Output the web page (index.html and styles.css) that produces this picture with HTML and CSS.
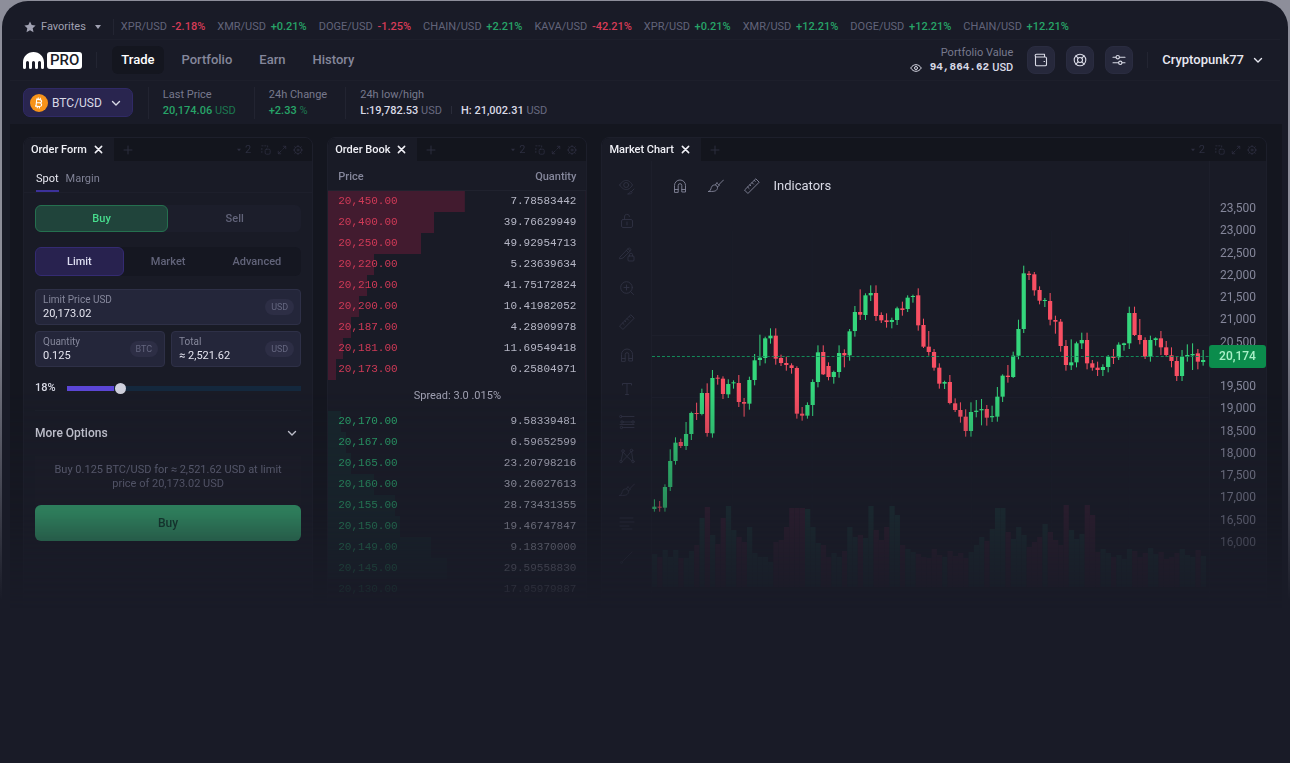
FILE: index.html
```html
<!DOCTYPE html>
<html lang="en">
<head>
<meta charset="utf-8">
<meta name="viewport" content="width=device-width, initial-scale=1">
<title>Trade BTC/USD</title>
<link rel="stylesheet" href="styles.css">
</head>
<body>
<svg class="sprite" aria-hidden="true">
  <symbol id="chevron" viewBox="0 0 12 12"><path d="M2.500 4.500 6 8l3.500-3.500"/></symbol>
  <symbol id="caret" viewBox="0 0 8 6"><path d="M1 1h6L4 5z" fill="currentColor" stroke="none"/></symbol>
  <symbol id="close" viewBox="0 0 10 10"><path d="m1.500 1.500 7 7m0-7-7 7"/></symbol>
  <symbol id="plus" viewBox="0 0 10 10"><path d="M5 1v8M1 5h8"/></symbol>
  <symbol id="link" viewBox="0 0 12 12"><rect x="5" y="5" width="6" height="6" rx="1.500"/><path d="M1 1h1.500M4.500 1H6M1 4v1.500M1 7.500V9M8 1v1.500"/></symbol>
  <symbol id="expand" viewBox="0 0 12 12"><path d="M7.500 1.500h3v3M10.500 1.500 7 5M4.500 10.500h-3v-3M1.500 10.500 5 7"/></symbol>
  <symbol id="gear" viewBox="0 0 12 12"><circle cx="6" cy="6" r="4.300"/><circle cx="6" cy="6" r="1.200"/><path d="M6 .5v1.200M6 10.300v1.200M.5 6h1.200M10.300 6h1.200M2.100 2.100l.9.9M9 9l.9.9M9.900 2.100 9 3M3 9l-.9.900"/></symbol>
  <symbol id="magnet" viewBox="0 0 16 16"><path d="M2.500 14V7.500a5.500 5.500 0 0 1 11 0V14H9.800V7.500a1.800 1.800 0 0 0-3.600 0V14zM2.500 11.500h3.700M9.800 11.500h3.700"/></symbol>
  <symbol id="brush" viewBox="0 0 16 16"><path d="M.5 13.500c2-.5 2.200-2 2.800-4C4 7.300 6 6.500 7.800 7.200c1.900.8 2.200 3 1 4.600-1.200 1.500-3 1.700-8.300 1.700zM7.500 6.800 9 4.500c.5 1.500 1.200 2.200 2.600 2.600L9.300 9M11 6.500l4.500-4.500"/></symbol>
  <symbol id="ruler" viewBox="0 0 16 16"><path d="M.8 11.800 11.800.8l3.400 3.400-11 11zM3.600 9l1.500 1.500M5.800 6.800l1 1M8 4.600l1.500 1.500M10.200 2.400l1 1"/></symbol>
  <symbol id="view-draw" viewBox="0 0 16 16"><path d="M.8 6C3 2.500 5 1.500 7.200 1.500S11.500 2.500 13.500 6C11.500 9.300 9.500 10.500 7.200 10.500S2.800 9.300.8 6zM9 15c1.500 0 1.500-2 2.700-2.500 1.300-.4 1.800 1 .8 1.800-.8.700-2 .7-3.500.7zM12.500 12.500l2.500-2.500"/><circle cx="7.200" cy="6" r="2.500"/></symbol>
  <symbol id="lock" viewBox="0 0 16 16"><rect x="2.500" y="6.500" width="11" height="8" rx="1.500"/><path d="M5.500 6.500V4a2.500 2.500 0 0 1 5-.5M8 9v3"/></symbol>
  <symbol id="pen-lock" viewBox="0 0 16 16"><path d="M1 11 9.500 2.200c1-.9 3.200 1.300 2.200 2.300L4 12l-3 .8zM9 2.800 11.200 5M7.500 4.500 9.500 6.500"/><rect x="9" y="10" width="6" height="5" rx="1"/><path d="M10.500 10V8.700a1.500 1.500 0 0 1 3 0V10"/></symbol>
  <symbol id="zoom" viewBox="0 0 16 16"><circle cx="7.500" cy="7.500" r="5.800"/><path d="M7.500 5v5M5 7.500h5M11.800 11.800l2.700 2.700"/></symbol>
  <symbol id="letter" viewBox="0 0 16 16"><path d="M3.500 4V2.500h9V4M8 2.500v11M6.500 13.500h3"/></symbol>
  <symbol id="fib" viewBox="0 0 16 16"><path d="M3 2.500h12M4.500 8h8M4.500 13.500H15M1 10.500h14"/><circle cx="1.800" cy="2.500" r="1.200"/><circle cx="14" cy="8" r="1.200"/><circle cx="3" cy="8" r="1.200"/><circle cx="2.500" cy="13.500" r="1.200"/></symbol>
  <symbol id="pattern" viewBox="0 0 16 16"><path d="M2 13 4 4l4 4.500L12.500 3l1.500 10M4 12.500l4-4 5 4.500"/><circle cx="2" cy="13.500" r="1.300"/><circle cx="4" cy="3" r="1.300"/><circle cx="12.500" cy="2.500" r="1.300"/><circle cx="14" cy="13.500" r="1.300"/></symbol>
  <symbol id="lines" viewBox="0 0 16 16"><path d="M1 3h13M1 7h14M1 11h9M3 14h10"/></symbol>
  <symbol id="trend" viewBox="0 0 16 16"><path d="M3 13 13 3"/><circle cx="2.500" cy="13.500" r="1"/></symbol>
</svg>

<div class="frame">
<div class="screen">
  <section class="ticker" aria-label="Favorite markets">
    <button class="favorites" type="button">
      <svg class="star" viewBox="0 0 12 12"><path d="m6 .5 1.700 3.600 3.900.5-2.900 2.700.8 3.900L6 9.300l-3.500 1.900.8-3.900L.4 4.600l3.900-.5z"/></svg>
      Favorites
      <svg class="icon caret"><use href="#caret"/></svg>
    </button>
    <span class="rule"></span>
    <ul class="ticks">
      <li>XPR/USD <b class="down">-2.18%</b></li>
      <li>XMR/USD <b class="up">+0.21%</b></li>
      <li>DOGE/USD <b class="down">-1.25%</b></li>
      <li>CHAIN/USD <b class="up">+2.21%</b></li>
      <li>KAVA/USD <b class="down">-42.21%</b></li>
      <li>XPR/USD <b class="up">+0.21%</b></li>
      <li>XMR/USD <b class="up">+12.21%</b></li>
      <li>DOGE/USD <b class="up">+12.21%</b></li>
      <li>CHAIN/USD <b class="up">+12.21%</b></li>
    </ul>
  </section>

  <header class="topbar">
    <a class="logo" href="#" aria-label="Pro home">
      <svg viewBox="0 0 21 17"><path d="M0 15.500V10.500C0 4.500 4.700 0 10.500 0S21 4.500 21 10.500v5a1.500 1.500 0 0 1-3 0v-5a1.500 1.500 0 0 0-3 0v5a1.500 1.500 0 0 1-3 0v-5a1.500 1.500 0 0 0-3 0v5a1.500 1.500 0 0 1-3 0v-5a1.500 1.500 0 0 0-3 0v5a1.500 1.500 0 0 1-3 0z"/></svg>
      <span class="badge">PRO</span>
    </a>
    <span class="rule"></span>
    <nav class="nav">
      <a class="current" href="#">Trade</a>
      <a href="#">Portfolio</a>
      <a href="#">Earn</a>
      <a href="#">History</a>
    </nav>
    <div class="account">
      <div class="worth">
        <span class="caption">Portfolio Value</span>
        <span class="amount"><svg class="eye" viewBox="0 0 12 8"><path d="M.7 4C2.200 1.700 4 .7 6 .7S9.800 1.700 11.300 4C9.800 6.300 8 7.300 6 7.300S2.200 6.300.7 4z"/><circle cx="6" cy="4" r="1.500"/></svg><span class="digits">94,864.62</span> USD</span>
      </div>
      <div class="actions">
        <button class="square" type="button" aria-label="Wallet"><svg class="icon" viewBox="0 0 14 14"><path d="M1.500 3v8.500a1.300 1.300 0 0 0 1.300 1.300h8.400a1.300 1.300 0 0 0 1.300-1.300V5.300A1.300 1.300 0 0 0 11.200 4H2.500a1.300 1.300 0 0 1 0-2.800h8V4M10 8.500h.6"/></svg></button>
        <button class="square" type="button" aria-label="Support"><svg class="icon" viewBox="0 0 14 14"><circle cx="7" cy="7" r="5.800"/><circle cx="7" cy="7" r="2.500"/><path d="m2.900 2.900 2.300 2.300M8.800 8.800l2.300 2.300M11.100 2.900 8.800 5.200M5.200 8.800l-2.300 2.300"/></svg></button>
        <button class="square" type="button" aria-label="Settings"><svg class="icon" viewBox="0 0 14 14"><path d="M1 4.200h3M7.500 4.200H13M1 9.800h5.500M10 9.800h3"/><circle cx="5.700" cy="4.200" r="1.700"/><circle cx="8.300" cy="9.800" r="1.700"/></svg></button>
      </div>
      <span class="rule"></span>
      <button class="user" type="button">Cryptopunk77 <svg class="icon"><use href="#chevron"/></svg></button>
    </div>
  </header>

  <section class="market" aria-label="Market summary">
    <button class="pair" type="button">
      <svg class="coin" viewBox="0 0 18 18"><circle cx="9" cy="9" r="9"/><path d="M6.800 4.800 5.900 13M6 5.200l3.800.4c2.600.3 2.300 3.500-.3 3.200 3 .4 2.700 4.100-.5 3.700l-4-.5M6.700 8.500l3 .3M8.300 3.500l-.2 1.700M10.400 3.700l-.2 1.800M7.400 12.600l-.2 1.700M9.500 12.800l-.2 1.700"/></svg>
      BTC/USD
      <svg class="icon"><use href="#chevron"/></svg>
    </button>
    <dl class="stats">
      <div><dt>Last Price</dt><dd class="up">20,174.06 <i>USD</i></dd></div>
      <div><dt>24h Change</dt><dd class="up">+2.33 <i>%</i></dd></div>
      <div><dt>24h low/high</dt><dd>L:19,782.53 <i>USD</i><span class="pipe"></span>H: 21,002.31 <i>USD</i></dd></div>
    </dl>
  </section>

  <main class="workspace">
    <section class="panel">
      <header class="tabs">
        <h2>Order Form <button type="button" aria-label="Close"><svg class="icon"><use href="#close"/></svg></button></h2>
        <button class="add" type="button" aria-label="Add tab"><svg class="icon"><use href="#plus"/></svg></button>
        <div class="tools"><span><svg class="icon caret"><use href="#caret"/></svg>2</span><svg class="icon"><use href="#link"/></svg><svg class="icon"><use href="#expand"/></svg><svg class="icon"><use href="#gear"/></svg></div>
      </header>
      <div class="modes"><button class="on" type="button">Spot</button><button type="button">Margin</button></div>
      <form class="order">
        <div class="side"><button class="on" type="button">Buy</button><button type="button">Sell</button></div>
        <div class="kind"><button class="on" type="button">Limit</button><button type="button">Market</button><button type="button">Advanced</button></div>
        <div class="fields">
          <label class="field wide"><span>Limit Price USD</span><input type="text" value="20,173.02"><em>USD</em></label>
          <label class="field"><span>Quantity</span><input type="text" value="0.125"><em>BTC</em></label>
          <label class="field"><span>Total</span><input type="text" value="≈ 2,521.62"><em>USD</em></label>
        </div>
        <div class="share"><label for="share">18%</label><input id="share" type="range" min="0" max="84" value="18"></div>
        <button class="more" type="button">More Options <svg class="icon"><use href="#chevron"/></svg></button>
        <p class="summary">Buy 0.125 BTC/USD for ≈ 2,521.62 USD at limit price of 20,173.02 USD</p>
        <button class="submit" type="submit">Buy</button>
      </form>
    </section>

    <section class="panel">
      <header class="tabs">
        <h2>Order Book <button type="button" aria-label="Close"><svg class="icon"><use href="#close"/></svg></button></h2>
        <button class="add" type="button" aria-label="Add tab"><svg class="icon"><use href="#plus"/></svg></button>
        <div class="tools"><span><svg class="icon caret"><use href="#caret"/></svg>2</span><svg class="icon"><use href="#link"/></svg><svg class="icon"><use href="#expand"/></svg><svg class="icon"><use href="#gear"/></svg></div>
      </header>
      <table class="book">
        <thead><tr><th>Price</th><th>Quantity</th></tr></thead>
        <tbody class="asks">
          <tr style="--depth:53%"><td>20,450.00</td><td>7.78583442</td></tr>
          <tr style="--depth:41%"><td>20,400.00</td><td>39.76629949</td></tr>
          <tr style="--depth:36%"><td>20,250.00</td><td>49.92954713</td></tr>
          <tr style="--depth:18%"><td>20,220.00</td><td>5.23639634</td></tr>
          <tr style="--depth:15%"><td>20,210.00</td><td>41.75172824</td></tr>
          <tr style="--depth:12%"><td>20,200.00</td><td>10.41982052</td></tr>
          <tr style="--depth:9%"><td>20,187.00</td><td>4.28909978</td></tr>
          <tr style="--depth:6%"><td>20,181.00</td><td>11.69549418</td></tr>
          <tr style="--depth:3%"><td>20,173.00</td><td>0.25804971</td></tr>
        </tbody>
        <tbody class="spread"><tr><td colspan="2">Spread: 3.0 .015%</td></tr></tbody>
        <tbody class="bids">
          <tr style="--depth:5%"><td>20,170.00</td><td>9.58339481</td></tr>
          <tr style="--depth:7%"><td>20,167.00</td><td>6.59652599</td></tr>
          <tr style="--depth:9%"><td>20,165.00</td><td>23.20798216</td></tr>
          <tr style="--depth:18%"><td>20,160.00</td><td>30.26027613</td></tr>
          <tr style="--depth:26%"><td>20,155.00</td><td>28.73431355</td></tr>
          <tr style="--depth:28%"><td>20,150.00</td><td>19.46747847</td></tr>
          <tr style="--depth:40%"><td>20,149.00</td><td>9.18370000</td></tr>
          <tr style="--depth:46%"><td>20,145.00</td><td>29.59558830</td></tr>
          <tr style="--depth:0%"><td>20,130.00</td><td>17.95979887</td></tr>
        </tbody>
      </table>
    </section>

    <section class="panel">
      <header class="tabs">
        <h2>Market Chart <button type="button" aria-label="Close"><svg class="icon"><use href="#close"/></svg></button></h2>
        <button class="add" type="button" aria-label="Add tab"><svg class="icon"><use href="#plus"/></svg></button>
        <div class="tools"><span><svg class="icon caret"><use href="#caret"/></svg>2</span><svg class="icon"><use href="#link"/></svg><svg class="icon"><use href="#expand"/></svg><svg class="icon"><use href="#gear"/></svg></div>
      </header>
      <div class="chart">
        <div class="palette">
          <svg class="icon"><use href="#view-draw"/></svg>
          <svg class="icon"><use href="#lock"/></svg>
          <svg class="icon"><use href="#pen-lock"/></svg>
          <svg class="icon"><use href="#zoom"/></svg>
          <svg class="icon"><use href="#ruler"/></svg>
          <svg class="icon"><use href="#magnet"/></svg>
          <svg class="icon"><use href="#letter"/></svg>
          <svg class="icon"><use href="#fib"/></svg>
          <svg class="icon"><use href="#pattern"/></svg>
          <svg class="icon"><use href="#brush"/></svg>
          <svg class="icon"><use href="#lines"/></svg>
          <svg class="icon"><use href="#trend"/></svg>
        </div>
        <div class="plot">
          <div class="plot-tools">
            <svg class="icon"><use href="#magnet"/></svg>
            <svg class="icon"><use href="#brush"/></svg>
            <svg class="icon"><use href="#ruler"/></svg>
            <button type="button">Indicators</button>
          </div>
          <svg id="candles" class="candles" viewBox="0 0 558 388" preserveAspectRatio="none" role="img" aria-label="BTC/USD price and volume"></svg>
        </div>
        <div class="axis">
          <ol id="scale"></ol>
          <strong>20,174</strong>
        </div>
      </div>
    </section>
  </main>
</div>
</div>
<script src="chart.js"></script>
</body>
</html>
```

FILE: styles.css
```css
* { box-sizing: border-box; }
body { margin: 0; background: #191b27; color: #d9dae6; font: 12px/16px Roboto, sans-serif; }
button, input { font: inherit; color: inherit; background: none; border: 0; padding: 0; margin: 0; }
button { cursor: pointer; }
a { color: inherit; text-decoration: none; }
h2, p, ul, ol, dl, dd { margin: 0; padding: 0; }
ul, ol { list-style: none; }
i, em { font-style: normal; }
.sprite { position: absolute; width: 0; height: 0; }
.icon { width: 12px; height: 12px; flex: none; fill: none; stroke: currentColor; stroke-width: 1.4; stroke-linecap: round; stroke-linejoin: round; }
.icon.caret { width: 8px; height: 6px; }
.up { color: #27a468; }
.down { color: #d63b57; }
.rule { width: 1px; height: 16px; background: #232532; flex: none; }

.frame { padding: 1px 2px 0; min-height: 100vh; background: linear-gradient(#8d8e9a 0, #8d8e9a 300px, #191b27 600px); }
.screen { min-height: calc(100vh - 1px); border-radius: 26px 26px 0 0; background: #191b27; overflow: hidden; }

.ticker { display: flex; align-items: center; height: 38px; padding: 14px 22px 0; font-size: 11px; line-height: 24px; white-space: nowrap; }
.favorites { display: flex; align-items: center; gap: 5px; color: #a0a1b2; }
.favorites .caret { margin: 0 11px 0 3px; }
.star { width: 12px; height: 12px; fill: #a0a1b2; }
.ticks { display: flex; gap: 12px; margin-left: 7px; color: #62647a; }
.ticks b { font-weight: 500; margin-left: 2px; }

.topbar, .market { display: flex; align-items: center; margin: 0 8px; padding: 0 16px 0 13px; border-top: 1px solid #1d1f2b; }
.topbar { height: 41px; }
.logo { display: flex; align-items: center; gap: 3px; color: #fff; margin-right: 14px; }
.logo svg { width: 21px; height: 17px; fill: #fff; }
.badge { padding: 0 3px; background: #fff; color: #191b27; border-radius: 3px; font: 500 15px/17px Roboto, sans-serif; }
.nav { display: flex; gap: 9px; margin-left: 15px; color: #85879b; font-size: 13px; font-weight: 500; }
.nav a { padding: 6px 9px; border-radius: 6px; }
.nav .current { color: #fff; background: #14161f; }
.account { display: flex; align-items: center; gap: 14px; margin-left: auto; }
.worth { display: flex; flex-direction: column; align-items: flex-end; line-height: 15px; font-size: 11px; }
.caption { color: #77798d; }
.amount { display: flex; align-items: center; gap: 3px; font-weight: 500; }
.eye { width: 12px; height: 8px; fill: none; stroke: #d9dae6; margin-right: 5px; }
.digits { font: 700 11px/15px "Liberation Mono", monospace; }
.actions { display: flex; gap: 11px; }
.square { display: grid; place-items: center; width: 28px; height: 28px; border: 1px solid #2a2c40; border-radius: 8px; background: #26283b; }
.square .icon { width: 14px; height: 14px; stroke-width: 1.1; }
.user { display: flex; align-items: center; gap: 8px; font-size: 13px; font-weight: 500; color: #e8e8f1; }

.market { height: 44px; }
.pair { display: flex; align-items: center; gap: 4px; height: 29px; padding: 0 10px 0 6px; border: 1px solid #302a66; border-radius: 7px; background: #29254f; }
.pair .icon { margin-left: 4px; }
.coin { width: 18px; height: 18px; fill: #f7931a; }
.coin path { fill: none; stroke: #fff; stroke-width: 1.1; }
.stats { display: flex; margin-left: 15px; font-size: 11px; }
.stats div { padding: 0 18px 0 14px; border-left: 1px solid #222431; }
.stats dt { color: #77798d; }
.stats dd { font-weight: 500; }
.stats i { font-weight: 400; color: #686a80; }
.stats .up i { color: #1c7850; }
.pipe { display: inline-block; width: 1px; height: 8px; margin: 0 9px; background: #2a2c3a; }

.workspace { display: grid; grid-template-columns: 58fr 52fr 133fr; gap: 14px; margin: 0 6px 0 8px; padding: 13px 15px 0 13px; background: #14161f;
  mask-image: linear-gradient(#000 265px, rgba(0,0,0,.58) 390px, rgba(0,0,0,.3) 430px, rgba(0,0,0,.12) 462px, transparent 484px); }
.panel { min-width: 0; height: 480px; overflow: hidden; border: 1px solid #1d1f2b; border-radius: 8px 8px 0 0; background: #191b26; }
.tabs { display: flex; align-items: center; height: 23px; background: #13151d; color: #2c2e3f; font-size: 11px; }
.tabs h2 { display: flex; align-items: center; gap: 7px; height: 24px; padding: 0 11px 0 7px; background: #191b26; color: #f0f0f6; font-size: 11px; font-weight: 500; white-space: nowrap; }
.tabs h2 .icon { display: block; width: 9px; height: 9px; stroke-width: 1.7; }
.add { margin-left: 9px; display: flex; }
.add .icon, .tools .icon { width: 10px; height: 10px; stroke-width: 1; }
.tools { display: flex; align-items: center; gap: 6px; margin-left: auto; padding-right: 9px; }
.tools span { display: flex; align-items: center; gap: 3px; margin-right: 4px; }
.tools .icon.caret { width: 6px; height: 4px; }

.modes { display: flex; gap: 7px; padding: 4px 12px 0; border-bottom: 1px solid #1d1f2b; font-size: 11px; color: #7f8195; }
.modes button { height: 27px; }
.modes .on { color: #e8e8f1; border-bottom: 2px solid #3c319a; border-top: 2px solid transparent; }
.order { display: flex; flex-direction: column; padding: 12px 11px 0; }
.side, .kind { display: flex; border-radius: 6px; color: #62647a; font-size: 11px; font-weight: 500; }
.side { background: #1c1e2b; }
.kind { margin-top: 15px; background: #151721; }
.side button, .kind button { flex: 1; height: 27px; border: 1px solid transparent; border-radius: 6px; }
.kind button { height: 29px; }
.side .on { color: #47dd8d; background: #20443b; border-color: #25704f; }
.kind .on { color: #dcdcf0; background: #28224f; border-color: #342b72; }
.fields { display: grid; grid-template-columns: 1fr 1fr; gap: 6px; margin-top: 13px; }
.field { position: relative; display: flex; flex-direction: column; height: 36px; padding: 3px 7px; border: 1px solid #2e3047; border-radius: 4px; background: #24263a; line-height: 14px; }
.field.wide { grid-column: 1 / -1; }
.field span { color: #85879b; font-size: 10px; }
.field input { width: 100%; height: 14px; font-size: 11px; color: #e3e3ee; }
.field em { position: absolute; right: 6px; top: 9px; padding: 0 6px; border-radius: 8px; background: #2d2e45; color: #64667f; font-size: 9px; line-height: 16px; }
.share { display: flex; align-items: center; gap: 11px; margin-top: 13px; font-size: 11px; font-weight: 500; }
.share input { appearance: none; flex: 1; min-width: 0; height: 16px; background: linear-gradient(90deg, #5b46d6 20%, #14283d 20%) center / 100% 5px no-repeat; }
.share input::-webkit-slider-thumb { appearance: none; width: 11px; height: 11px; border-radius: 50%; background: #cfd0dd; }
.more { display: flex; align-items: center; justify-content: space-between; margin-top: 14px; padding: 14px 3px 0 0; border-top: 1px solid #1c1e2a; font-size: 12px; font-weight: 500; }
.summary { margin-top: 15px; padding: 7px 12px 14px; color: #6a6c82; font-size: 11px; line-height: 14px; text-align: center; background: #1b1c27; }
.submit { height: 36px; border-radius: 6px; background: #3cbf7e; color: #0f4832; font-size: 12px; font-weight: 500; }

.book { width: 100%; border-collapse: collapse; font: 11px/21px "Liberation Mono", monospace; color: #b6b7c6; }
.book th { padding: 2px 10px 0; height: 29px; border-bottom: 1px solid #20222e; color: #85879b; font: 500 11px/27px Roboto, sans-serif; text-align: left; }
.book td { height: 21px; padding: 0 10px; }
.book th:last-child, .book tr > td:last-child { text-align: right; }
.asks tr { background: linear-gradient(90deg, #421b2f var(--depth), transparent var(--depth)); }
.asks td:first-child { color: #d03a57; }
.bids tr { background: linear-gradient(90deg, #17262c var(--depth), transparent var(--depth)); }
.bids td:first-child { color: #2aa76c; }
.book .spread tr > td { height: 31px; font: 11px/31px Roboto, sans-serif; color: #a2a3b4; text-align: center; }

.chart { display: grid; grid-template-columns: 50px minmax(0, 1fr) 57px; height: 440px; }
.palette { display: flex; flex-direction: column; justify-content: space-between; padding: 18px 0 36px 17px; border-right: 1px solid #1d1f2b; color: #303243; }
.palette .icon, .plot-tools .icon { width: 16px; height: 16px; stroke-width: .9; }
.plot { display: flex; flex-direction: column; }
.plot-tools { display: flex; align-items: center; gap: 20px; padding-left: 20px; height: 50px; flex: none; color: #85879b; }
.plot-tools button { margin-left: -7px; font-size: 13px; color: #d9dae6; }
.candles { width: 100%; height: 388px; }
.axis { position: relative; border-left: 1px solid #1d1f2b; font-size: 12px; color: #85879b; }
.axis ol { display: flex; flex-direction: column; justify-content: space-between; height: 350px; margin-top: 39px; text-align: center; }
.axis li { height: 16px; }
.axis strong { position: absolute; top: 184px; left: -1px; right: 0; height: 23px; border-radius: 3px; background: #0b8c4c; color: #a8f0c8; font-weight: 500; line-height: 23px; text-align: center; }
```

FILE: chart.js
```js
// Each candle: direction, then high, body top, body bottom and low, in thirds of a unit.
const candles = `
G748,770,777,785 R753,770,773,785 G703,711,773,785 G598,633,711,723 G562,578,633,644
R566,576,588,594 G516,552,588,600 G485,489,552,570 R458,489,492,510 G416,429,492,496
R400,429,549,560 G360,384,550,563 R375,383,386,404 R379,386,432,447 G388,402,433,444
G391,397,400,416 R375,399,456,471 R444,456,461,500 G380,390,461,479 G312,331,390,406
G254,323,330,347 G260,265,324,340 G235,257,265,281 R235,257,326,344 R314,324,339,348
R320,339,345,362 R340,346,354,371 R349,354,491,506 R471,491,497,512 G457,465,497,506
G388,396,465,498 G286,307,396,412 R286,306,373,375 R337,348,381,391 G362,366,381,401
G286,309,366,383 R298,309,316,352 G237,244,316,332 G168,186,243,260 R118,186,194,210
G130,136,195,210 G106,129,136,153 R106,129,198,213 R187,195,211,219 R190,211,216,233
G203,210,216,235 G170,175,210,225 R155,175,180,197 G136,143,177,186 G134,138,141,158
R115,136,226,242 R206,225,290,294 R243,290,306,317 R297,306,353,362 R340,353,401,416
G392,396,401,417 R375,396,459,463 R445,460,480,486 R457,480,500,518 R478,500,543,560
G457,486,543,560 G450,482,486,502 G447,477,481,526 R465,477,503,527 G467,498,502,516
G411,440,500,515 G373,377,440,456 R345,377,381,398 G305,317,381,384 G209,237,317,328
G47,70,237,249 R63,71,75,90 R66,73,121,137 R109,120,152,163 G144,150,153,171
R129,153,209,226 R197,210,215,251 R207,215,288,305 R270,288,345,362 G268,337,346,360
G275,280,337,352 G248,270,280,297 R248,270,340,358 R330,340,353,362 R335,353,360,378
G343,351,360,378 G315,320,351,367 R297,320,324,342 G277,284,322,330 G278,280,285,302
G170,189,280,297 R170,189,255,258 R207,255,270,283 R262,270,320,327 G257,270,320,335
G262,265,270,287 R243,265,292,315 R273,292,315,320 R292,316,333,352 R320,333,378,393
G300,320,378,393 G283,315,320,335 G280,312,316,360 R297,310,335,358 G300,330,336,347`.trim().split(/\s+/);

const volumes = [33,30,37,30,37,29,29,36,42,69,80,52,43,69,81,57,50,45,60,34,30,30,25,45,47,60,79,79,79,78,60,44,42,30,34,30,36,60,50,52,49,81,57,47,60,81,72,42,38,35,33,30,29,38,32,30,36,31,34,29,35,42,50,46,58,79,79,55,48,60,52,40,45,50,63,55,47,42,82,57,48,53,82,72,35,38,34,30,32,28,38,36,30,34,39,33,35,28,30,34,38,32,30,37,31];

const step = 5.29;
const base = 376;
const lastPrice = 20174;
const y = v => v / 3 + 39;
const rect = (x, top, w, h, color) =>
  `<rect x="${x.toFixed(2)}" y="${top.toFixed(2)}" width="${w}" height="${h.toFixed(2)}" fill="${color}"/>`;

let out = '';
for (const top of [124, 186]) out += rect(0, top, 558, 1, '#1d1f2b');
for (const left of [80, 160, 240, 320, 400, 478]) out += rect(left, 20, 1, base - 20, '#1b1d29');
candles.forEach((c, i) => {
  const up = c[0] === 'G';
  out += rect(step * i, base - volumes[i], 5.29, volumes[i], up ? '#1b3034' : '#331e31');
});
candles.forEach((c, i) => {
  const [high, top, bottom, low] = c.slice(1).split(',').map(Number).map(y);
  const color = c[0] === 'G' ? '#34d67c' : '#f84f63';
  const x = 2.4 + step * i;
  out += rect(x - .5, high, 1, low - high, color);
  out += rect(x - 2.1, top, 4.2, Math.max(bottom - top, 1), color);
});
out += '<path d="M0 145.500H558" stroke="#138a58" stroke-dasharray="3 2"/>';
document.getElementById('candles').innerHTML = out;

// The step that the last-price tag covers stays blank.
let labels = '';
for (let price = 23500; price >= 16000; price -= 500) {
  labels += `<li>${Math.abs(price - lastPrice) < 200 ? '' : price.toLocaleString('en-US')}</li>`;
}
document.getElementById('scale').innerHTML = labels;
```
